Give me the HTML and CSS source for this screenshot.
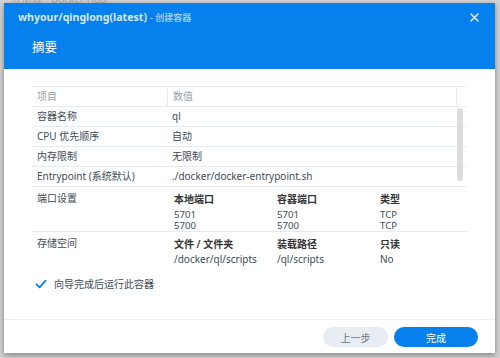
FILE: index.html
```html
<!DOCTYPE html>
<html lang="zh-cn">
<head>
    <meta charset="UTF-8">
    <meta name="viewport" content="width=device-width, initial-scale=1.0">
    <title>创建容器</title>
    <link rel="stylesheet" href="styles.css">
</head>
<body>

    <div class="fundo">注册表 • Docker Hub</div>

    <div class="janela">
        <div class="cabecalho">
            <div class="barra-titulo">
                <span class="titulo">whyour/qinglong(latest)</span>
                <span class="subtitulo">- 创建容器</span>
                <span class="fechar">
                    <svg width="9" height="9" viewBox="0 0 9 9">
                        <path d="M1 1 L8 8 M8 1 L1 8" stroke="#d6e8fb" stroke-width="1.6" stroke-linecap="round"/>
                    </svg>
                </span>
            </div>
            <h1>摘要</h1>
        </div>

        <div class="corpo">
            <div class="tabela">
                <div class="linha topo">
                    <div class="celula rotulo">项目</div>
                    <div class="celula valor">数值</div>
                    <div class="calha"></div>
                </div>
                <div class="linha">
                    <div class="celula rotulo">容器名称</div>
                    <div class="celula valor">ql</div>
                </div>
                <div class="linha">
                    <div class="celula rotulo">CPU 优先顺序</div>
                    <div class="celula valor">自动</div>
                </div>
                <div class="linha">
                    <div class="celula rotulo">内存限制</div>
                    <div class="celula valor">无限制</div>
                </div>
                <div class="linha">
                    <div class="celula rotulo">Entrypoint (系统默认)</div>
                    <div class="celula valor">./docker/docker-entrypoint.sh</div>
                </div>
                <div class="linha alta">
                    <div class="celula rotulo">端口设置</div>
                    <div class="celula valor sub">
                        <div class="subcol">
                            <b>本地端口</b>
                            <div class="lista"><span>5701</span><span>5700</span></div>
                        </div>
                        <div class="subcol">
                            <b>容器端口</b>
                            <div class="lista"><span>5701</span><span>5700</span></div>
                        </div>
                        <div class="subcol">
                            <b>类型</b>
                            <div class="lista"><span>TCP</span><span>TCP</span></div>
                        </div>
                    </div>
                </div>
                <div class="linha alta ultima">
                    <div class="celula rotulo">存储空间</div>
                    <div class="celula valor sub">
                        <div class="subcol">
                            <b>文件 / 文件夹</b>
                            <div class="unico">/docker/ql/scripts</div>
                        </div>
                        <div class="subcol">
                            <b>装载路径</b>
                            <div class="unico">/ql/scripts</div>
                        </div>
                        <div class="subcol">
                            <b>只读</b>
                            <div class="unico">No</div>
                        </div>
                    </div>
                </div>
                <div class="rolagem"></div>
            </div>

            <label class="opcao">
                <svg width="12" height="12" viewBox="0 0 12 12">
                    <path d="M1.5 6.3 L4.6 9.3 L10.6 2.6" fill="none" stroke="#0a7fe9" stroke-width="1.8" stroke-linecap="round" stroke-linejoin="round"/>
                </svg>
                向导完成后运行此容器
            </label>
        </div>

        <div class="rodape">
            <button class="btn-voltar">上一步</button>
            <button class="btn-concluir">完成</button>
        </div>
    </div>

</body>
</html>
```

FILE: styles.css
```css
* {
    margin: 0;
    padding: 0;
    box-sizing: border-box;
}

body {
    font-family: 'Noto Sans', 'Noto Sans CJK SC', sans-serif;
    font-size: 10px;
    background: #d3d3d3;
    color: #414b55;
    width: 500px;
    height: 358px;
    overflow: hidden;
    position: relative;
}

.fundo {
    position: absolute;
    top: -7px;
    left: 12px;
    color: #a8a8a8;
    font-size: 10px;
    line-height: 12px;
}

.janela {
    position: relative;
    margin: 3px 0 0 4px;
    width: 491px;
    height: 350px;
    background: #fff;
    display: flex;
    flex-direction: column;
    box-shadow: 0 2px 6px rgba(0, 0, 0, 0.4);
}

.cabecalho {
    background: #0680ec;
    height: 66px;
    padding: 0 14px;
}

.barra-titulo {
    height: 28px;
    display: flex;
    align-items: center;
    color: #d6e8fb;
}

.titulo {
    font-weight: bold;
    font-size: 10.6px;
}

.subtitulo {
    font-size: 9px;
    margin-left: 3px;
}

.fechar {
    margin-left: auto;
    margin-right: 2px;
    display: flex;
}

h1 {
    color: #fff;
    font-size: 12.5px;
    font-weight: normal;
    line-height: 20px;
    margin-top: 7px;
    padding-left: 14px;
}

.corpo {
    flex: 1;
    padding: 17px 28px 0 28px;
}

.tabela {
    position: relative;
    border-top: 1px solid #e6ebf0;
}

.linha {
    display: flex;
    height: 20px;
    border-bottom: 1px solid #e6ebf0;
}

.linha.topo {
    color: #9aa1a8;
}

.celula {
    line-height: 19px;
    padding-left: 5px;
}

.rotulo {
    width: 135px;
    flex-shrink: 0;
}

.valor {
    flex: 1;
}

.topo .valor {
    border-left: 1px solid #e6ebf0;
}

.calha {
    width: 11px;
    border-left: 1px solid #e6ebf0;
}

.linha.alta {
    height: 45px;
}

.linha.ultima {
    height: 40px;
    border-bottom: none;
}

.alta .rotulo {
    padding-top: 4px;
    line-height: 14px;
}

.sub {
    display: flex;
    padding-top: 4px;
    padding-left: 7px;
    line-height: 16px;
}

.subcol {
    width: 103px;
    flex-shrink: 0;
}

.subcol:last-child {
    width: auto;
}

.subcol b {
    display: block;
    color: #333;
    font-weight: 600;
}

.lista {
    margin-top: 2px;
    display: flex;
    flex-direction: column;
    font-size: 9.6px;
}

.lista span {
    height: 11px;
    line-height: 11px;
}

.unico {
    line-height: 14px;
}

.rolagem {
    position: absolute;
    top: 21px;
    right: 4px;
    width: 6px;
    height: 73px;
    border-radius: 3px;
    background: #dcdcdc;
}

.opcao {
    display: flex;
    align-items: center;
    gap: 7px;
    margin-top: 5px;
    padding-left: 3px;
    line-height: 14px;
}

.rodape {
    height: 34px;
    border-top: 1px solid #eceff2;
    display: flex;
    justify-content: flex-end;
    align-items: flex-start;
    gap: 6px;
    padding: 7px 17px 0 0;
}

button {
    font-family: inherit;
    font-size: 10px;
    height: 20px;
    border: none;
    border-radius: 10px;
    cursor: pointer;
}

.btn-voltar {
    width: 65px;
    background: #e7edf3;
    color: #6b7580;
}

.btn-concluir {
    width: 84px;
    background: #0680ec;
    color: #fff;
}
```
